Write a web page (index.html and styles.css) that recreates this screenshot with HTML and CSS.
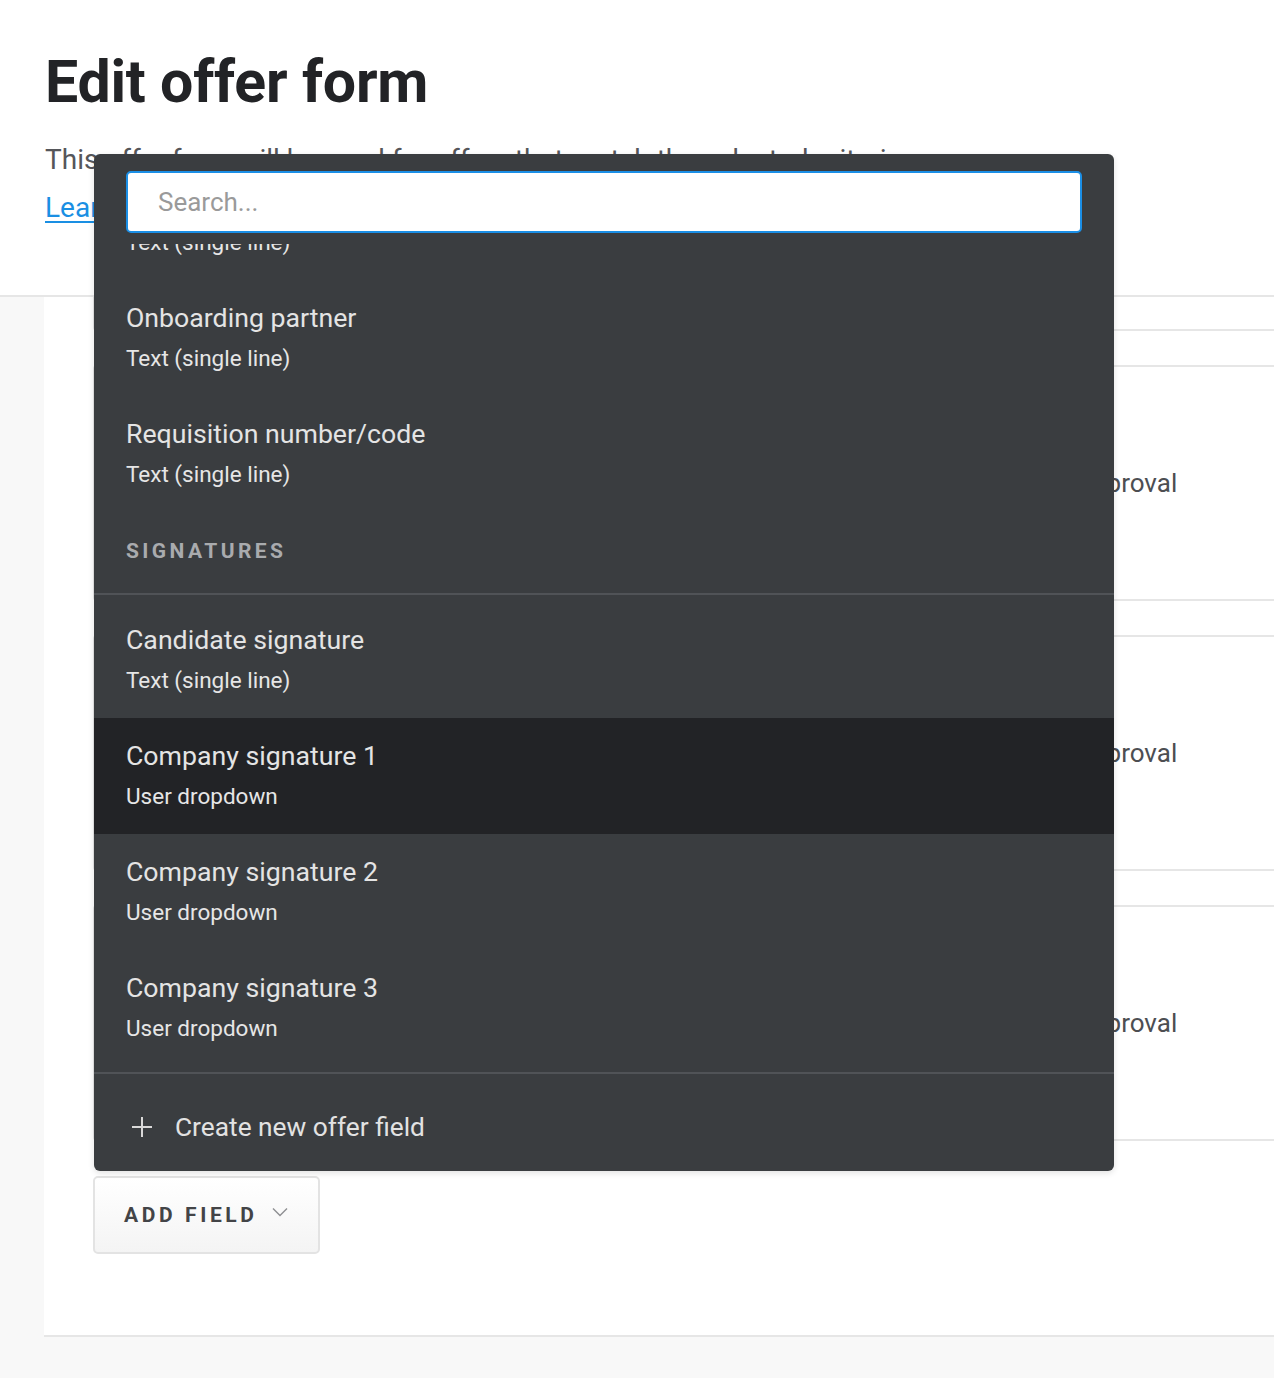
FILE: index.html
```html
<!DOCTYPE html>
<html lang="en">
<head>
<meta charset="utf-8">
<title>Edit offer form</title>
<link rel="stylesheet" href="styles.css">
</head>
<body>
<div class="page">
  <header class="head">
    <h1 class="title">Edit offer form</h1>
    <p class="lead">This offer form will be used for offers that match the selected criteria.<br><a class="link" href="#">Learn more</a></p>
  </header>

  <main class="main">
    <div class="panel">
      <div class="card card-first"></div>
      <div class="card">
        <div class="card-name">Offer approval chain</div>
        <div class="card-meta">Approval</div>
      </div>
      <div class="card">
        <div class="card-name">Offer approval chain</div>
        <div class="card-meta">Approval</div>
      </div>
      <div class="card">
        <div class="card-name">Offer approval chain</div>
        <div class="card-meta">Approval</div>
      </div>
      <button class="add-btn" type="button">
        <span class="add-label">ADD FIELD</span>
        <svg class="chev" width="16" height="10" viewBox="0 0 16 10"><path d="M1 1.5 8 8.5 15 1.5" fill="none" stroke="#8e8f92" stroke-width="1.4"/></svg>
      </button>
    </div>
  </main>

  <div class="menu">
    <div class="search-wrap">
      <div class="search">Search...</div>
    </div>
    <div class="list">
      <div class="list-inner">
        <div class="item">
          <div class="item-title">Onboarding buddy</div>
          <div class="item-sub">Text (single line)</div>
        </div>
        <div class="item">
          <div class="item-title">Onboarding partner</div>
          <div class="item-sub">Text (single line)</div>
        </div>
        <div class="item">
          <div class="item-title">Requisition number/code</div>
          <div class="item-sub">Text (single line)</div>
        </div>
        <div class="group-head">SIGNATURES</div>
        <div class="group">
          <div class="item">
            <div class="item-title">Candidate signature</div>
            <div class="item-sub">Text (single line)</div>
          </div>
          <div class="item item-active">
            <div class="item-title">Company signature 1</div>
            <div class="item-sub">User dropdown</div>
          </div>
          <div class="item">
            <div class="item-title">Company signature 2</div>
            <div class="item-sub">User dropdown</div>
          </div>
          <div class="item">
            <div class="item-title">Company signature 3</div>
            <div class="item-sub">User dropdown</div>
          </div>
        </div>
      </div>
    </div>
    <div class="menu-foot">
      <svg class="plus" width="22" height="22" viewBox="0 0 22 22"><path d="M11 1v20M1 11h20" fill="none" stroke="#d9d9d9" stroke-width="2"/></svg>
      <span class="foot-label">Create new offer field</span>
    </div>
  </div>
</div>
</body>
</html>
```

FILE: styles.css
```css
* { box-sizing: border-box; }

html, body {
  margin: 0;
  padding: 0;
  background: #f8f8f8;
  font-family: Roboto, "Liberation Sans", sans-serif;
}

.page {
  position: relative;
  min-height: 1378px;
  display: flex;
  flex-direction: column;
}

.head {
  background: #ffffff;
  padding: 47px 45px 63px;
  border-bottom: 2px solid #e6e6e6;
}

.title {
  margin: 0;
  font-size: 59px;
  line-height: 70px;
  font-weight: 700;
  color: #222326;
  letter-spacing: -0.2px;
}

.lead {
  margin: 19px 0 0;
  font-size: 28px;
  line-height: 48px;
  color: #55565a;
}

.link {
  color: #1a8fe3;
  text-decoration: underline;
  text-decoration-thickness: 2px;
  text-underline-offset: 4px;
}

.main {
  flex: 1;
  background: #f8f8f8;
  padding-left: 44px;
}

.panel {
  background: #ffffff;
  border-bottom: 2px solid #e6e6e6;
  padding: 0 0 81px 49px;
  display: flex;
  flex-direction: column;
  align-items: flex-start;
}

.card {
  width: 100%;
  height: 236px;
  margin-top: 34px;
  border: 2px solid #e6e6e6;
  border-right: none;
  border-radius: 4px 0 0 4px;
  background: #ffffff;
  display: flex;
  align-items: center;
  padding-left: 30px;
}

.card-first {
  height: 34px;
  margin-top: 0;
  border-top: none;
  border-radius: 0 0 0 4px;
}

.card-name {
  flex: 0 0 950px;
  font-size: 26px;
  color: #222326;
}

.card-meta {
  font-size: 26px;
  color: #4d4e52;
}

.add-btn {
  margin-top: 35px;
  width: 227px;
  height: 78px;
  border: 2px solid #e3e3e3;
  border-radius: 5px;
  background: linear-gradient(#ffffff, #f4f4f4);
  display: flex;
  align-items: center;
  padding: 0 0 0 29px;
  gap: 14px;
  font-family: Roboto, "Liberation Sans", sans-serif;
  cursor: pointer;
}

.add-label {
  font-size: 21px;
  font-weight: 700;
  letter-spacing: 3.6px;
  color: #434447;
}

.chev { margin-top: -6px; }

/* dropdown overlay */
.menu {
  position: absolute;
  left: 94px;
  top: 154px;
  width: 1020px;
  background: #3a3d40;
  border-radius: 6px;
  color: #e2e2e2;
  box-shadow: 0 2px 6px rgba(0, 0, 0, 0.12);
}

.search-wrap {
  padding: 17px 32px 11px;
}

.search {
  height: 62px;
  background: #ffffff;
  border: 2px solid #1b8fe6;
  border-radius: 5px;
  padding-left: 30px;
  font-size: 26px;
  line-height: 58px;
  color: #9a9a9a;
}

.list {
  overflow: hidden;
  padding-bottom: 6px;
}

.list-inner {
  margin-top: -80px;
}

.item {
  padding: 20px 32px 17px;
}

.item-active {
  background: #222326;
}

.item-title {
  font-size: 26.7px;
  line-height: 37px;
  color: #e4e4e4;
}

.item-sub {
  font-size: 22.5px;
  line-height: 42px;
  color: #e6e6e6;
}

.group-head {
  padding: 28px 32px 31px;
  font-size: 21px;
  line-height: 22px;
  font-weight: 700;
  letter-spacing: 3.4px;
  color: #a9abae;
  border-bottom: 2px solid #505357;
}

.group {
  padding-top: 7px;
}

.menu-foot {
  border-top: 2px solid #505357;
  padding: 34px 32px 25px 37px;
  display: flex;
  align-items: center;
  gap: 22px;
}

.foot-label {
  font-size: 26.3px;
  line-height: 38px;
  color: #e2e2e2;
}
```
